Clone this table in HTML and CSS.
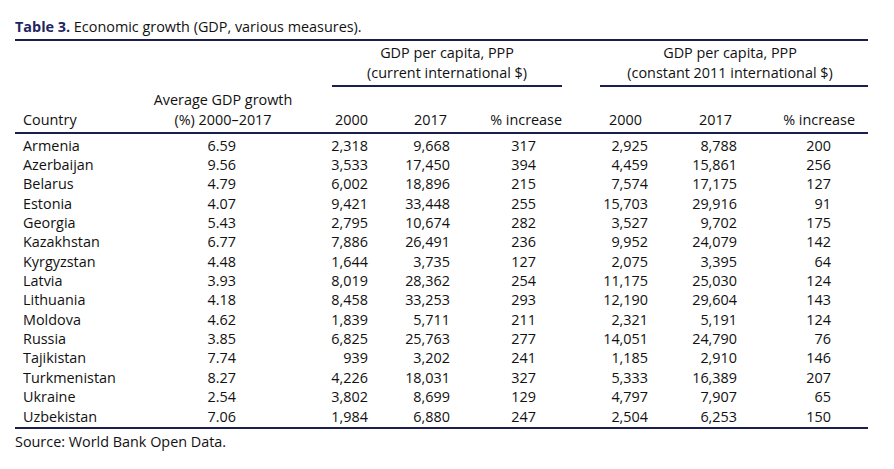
FILE: index.html
```html
<!DOCTYPE html>
<html lang="en">
<head>
<meta charset="utf-8">
<title>Table 3. Economic growth</title>
<link rel="stylesheet" href="styles.css">
</head>
<body>
<div class="page">
  <div class="caption"><span class="label">Table 3.</span> Economic growth (GDP, various measures).</div>
  <table class="data">
    <colgroup>
      <col class="w1"><col class="w2"><col class="w3"><col class="w4"><col class="w5"><col class="w6"><col class="w7"><col class="w8">
    </colgroup>
    <thead>
      <tr class="group-row">
        <th colspan="2"></th>
        <th colspan="3" class="group"><div class="group-inner g-left">GDP per capita, PPP<br>(current international $)</div></th>
        <th colspan="3" class="group"><div class="group-inner g-right"><span class="gtext">GDP per capita, PPP<br>(constant 2011 international $)</span></div></th>
      </tr>
      <tr class="col-row">
        <th class="h-country">Country</th>
        <th class="h-avg">Average GDP growth<br>(%) 2000–2017</th>
        <th class="h3">2000</th>
        <th class="h4">2017</th>
        <th class="h5">% increase</th>
        <th class="h6">2000</th>
        <th class="h7">2017</th>
        <th class="h8">% increase</th>
      </tr>
    </thead>
    <tbody>
      <tr><td>Armenia</td><td>6.59</td><td>2,318</td><td>9,668</td><td>317</td><td>2,925</td><td>8,788</td><td>200</td></tr>
      <tr><td>Azerbaijan</td><td>9.56</td><td>3,533</td><td>17,450</td><td>394</td><td>4,459</td><td>15,861</td><td>256</td></tr>
      <tr><td>Belarus</td><td>4.79</td><td>6,002</td><td>18,896</td><td>215</td><td>7,574</td><td>17,175</td><td>127</td></tr>
      <tr><td>Estonia</td><td>4.07</td><td>9,421</td><td>33,448</td><td>255</td><td>15,703</td><td>29,916</td><td>91</td></tr>
      <tr><td>Georgia</td><td>5.43</td><td>2,795</td><td>10,674</td><td>282</td><td>3,527</td><td>9,702</td><td>175</td></tr>
      <tr><td>Kazakhstan</td><td>6.77</td><td>7,886</td><td>26,491</td><td>236</td><td>9,952</td><td>24,079</td><td>142</td></tr>
      <tr><td>Kyrgyzstan</td><td>4.48</td><td>1,644</td><td>3,735</td><td>127</td><td>2,075</td><td>3,395</td><td>64</td></tr>
      <tr><td>Latvia</td><td>3.93</td><td>8,019</td><td>28,362</td><td>254</td><td>11,175</td><td>25,030</td><td>124</td></tr>
      <tr><td>Lithuania</td><td>4.18</td><td>8,458</td><td>33,253</td><td>293</td><td>12,190</td><td>29,604</td><td>143</td></tr>
      <tr><td>Moldova</td><td>4.62</td><td>1,839</td><td>5,711</td><td>211</td><td>2,321</td><td>5,191</td><td>124</td></tr>
      <tr><td>Russia</td><td>3.85</td><td>6,825</td><td>25,763</td><td>277</td><td>14,051</td><td>24,790</td><td>76</td></tr>
      <tr><td>Tajikistan</td><td>7.74</td><td>939</td><td>3,202</td><td>241</td><td>1,185</td><td>2,910</td><td>146</td></tr>
      <tr><td>Turkmenistan</td><td>8.27</td><td>4,226</td><td>18,031</td><td>327</td><td>5,333</td><td>16,389</td><td>207</td></tr>
      <tr><td>Ukraine</td><td>2.54</td><td>3,802</td><td>8,699</td><td>129</td><td>4,797</td><td>7,907</td><td>65</td></tr>
      <tr><td>Uzbekistan</td><td>7.06</td><td>1,984</td><td>6,880</td><td>247</td><td>2,504</td><td>6,253</td><td>150</td></tr>
    </tbody>
  </table>
  <div class="source">Source: World Bank Open Data.</div>
</div>
</body>
</html>
```

FILE: styles.css
```css
html, body {
  margin: 0;
  padding: 0;
  background: #ffffff;
}

body {
  font-family: "Open Sans", "Noto Sans", sans-serif;
  font-size: 14.4px;
  line-height: 20px;
  color: #111111;
}

.page {
  padding: 17px 0 0 15px;
  width: 853px;
}

.caption {
  height: 20px;
  margin-bottom: 2px;
  white-space: nowrap;
}

.caption .label {
  font-weight: 700;
  color: #1f2561;
}

.data {
  width: 853px;
  table-layout: fixed;
  border-collapse: separate;
  border-spacing: 0;
  border-top: 2px solid #1b1f4f;
  border-bottom: 2px solid #1b1f4f;
}

.w1 { width: 135px; }
.w2 { width: 150px; }
.w3 { width: 75px; }
.w4 { width: 80px; }
.w5 { width: 120px; }
.w6 { width: 80px; }
.w7 { width: 90px; }
.w8 { width: 123px; }

th {
  font-weight: 400;
  padding: 0;
  white-space: nowrap;
}

.group-row th {
  padding-top: 1.5px;
  vertical-align: bottom;
}

.group-inner {
  text-align: center;
  padding-bottom: 2.5px;
  border-bottom: 2px solid #1b1f4f;
}

.g-left {
  margin-left: 32px;
  margin-right: 13px;
}

.g-right {
  margin-left: 25px;
  margin-right: 0;
}

.g-right .gtext {
  display: block;
  padding-right: 8px;
}

.col-row th {
  padding-top: 3px;
  padding-bottom: 2px;
  vertical-align: bottom;
  border-bottom: 2px solid #1b1f4f;
  text-align: right;
}

.col-row .h-country {
  text-align: left;
  padding-left: 8px;
}

.col-row .h-avg {
  text-align: center;
  padding-right: 4px;
}

.col-row .h3 { padding-right: 7px; }
.col-row .h4 { padding-right: 8px; }
.col-row .h5 { padding-right: 13px; }
.col-row .h6 { padding-right: 13px; }
.col-row .h7 { padding-right: 13px; }
.col-row .h8 { padding-right: 13px; }

td {
  padding: 0;
  line-height: 19.36px;
  text-align: right;
  white-space: nowrap;
}

tbody tr:first-child td { padding-top: 1.5px; }
tbody tr:last-child td { padding-bottom: 1.5px; }

td:nth-child(1) { text-align: left; padding-left: 8px; }
td:nth-child(2) { padding-right: 64px; }
td:nth-child(3) { padding-right: 7px; }
td:nth-child(4) { padding-right: 5px; }
td:nth-child(5) { padding-right: 39px; }
td:nth-child(6) { padding-right: 7px; }
td:nth-child(7) { padding-right: 8px; }
td:nth-child(8) { padding-right: 37px; }

.source {
  margin-top: 3px;
  white-space: nowrap;
}
```
